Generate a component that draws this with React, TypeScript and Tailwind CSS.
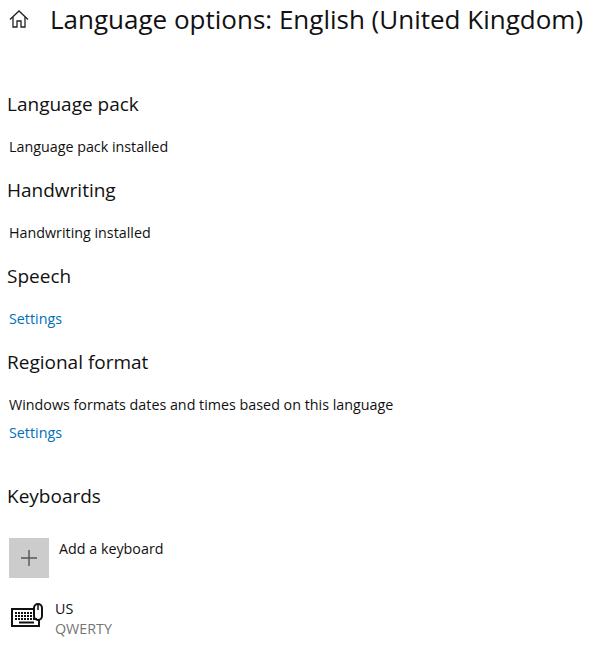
function SectionTitle({ children, className }: { children: string; className: string }) {
  return <h2 className={`pl-[7px] text-[19px] leading-[28px] text-[#111] ${className}`}>{children}</h2>;
}

function Row({ children, className }: { children: string; className: string }) {
  return <p className={`pl-[9px] text-[14.3px] leading-[20px] ${className}`}>{children}</p>;
}

function HomeIcon() {
  return (
    <svg width="20" height="20" viewBox="0 0 20 20" fill="none" stroke="#222" strokeWidth="1.3">
      <path d="M1 10.500 10 2l9 8.500" />
      <path d="M4 8v10h4v-6h4v6h4V8" />
    </svg>
  );
}

function PlusIcon() {
  return (
    <svg width="18" height="18" viewBox="0 0 18 18" stroke="#555" strokeWidth="1.4">
      <path d="M1 9h16M9 1v16" />
    </svg>
  );
}

function KeyboardIcon() {
  return (
    <svg className="mt-[3px]" width="34" height="28" viewBox="0 0 34 28" fill="none" stroke="#111">
      <path d="M23 7H2v17h27v-6" strokeWidth="2" />
      <path d="M5 11h17M5 14h18M5 17h22" strokeWidth="2" strokeDasharray="2 1" />
      <path d="M9 20.500h15" strokeWidth="2" />
      <rect x="24" y="2" width="8" height="16" rx="4" strokeWidth="2" />
      <path d="M28 3v5" strokeWidth="1.500" />
    </svg>
  );
}

export default function App() {
  return (
    <div className="w-[602px] h-[661px] bg-white overflow-hidden font-['Open_Sans',sans-serif] text-[#111]">
      <div className="flex items-center pl-[9px]">
        <HomeIcon />
        <h1 className="ml-[21px] text-[26px] leading-[38px] whitespace-nowrap">Language options: English (United Kingdom)</h1>
      </div>
      <SectionTitle className="mt-[52px]">Language pack</SectionTitle>
      <Row className="mt-[19px]">Language pack installed</Row>
      <SectionTitle className="mt-[19px]">Handwriting</SectionTitle>
      <Row className="mt-[19px]">Handwriting installed</Row>
      <SectionTitle className="mt-[19px]">Speech</SectionTitle>
      <Row className="mt-[19px] text-[#0070b8]">Settings</Row>
      <SectionTitle className="mt-[19px]">Regional format</SectionTitle>
      <Row className="mt-[19px]">Windows formats dates and times based on this language</Row>
      <Row className="mt-[8px] text-[#0070b8]">Settings</Row>
      <SectionTitle className="mt-[39px]">Keyboards</SectionTitle>
      <div className="mt-[28px] ml-[9px] flex items-start">
        <div className="w-10 h-10 bg-[#cccccc] flex items-center justify-center">
          <PlusIcon />
        </div>
        <span className="ml-[10px] mt-px text-[14.3px] leading-[20px]">Add a keyboard</span>
      </div>
      <div className="mt-[21px] ml-[10px] flex items-start">
        <KeyboardIcon />
        <div className="ml-[11px] text-[14.3px] leading-[20px]">
          <div>US</div>
          <div className="text-[#767676]">QWERTY</div>
        </div>
      </div>
    </div>
  );
}
